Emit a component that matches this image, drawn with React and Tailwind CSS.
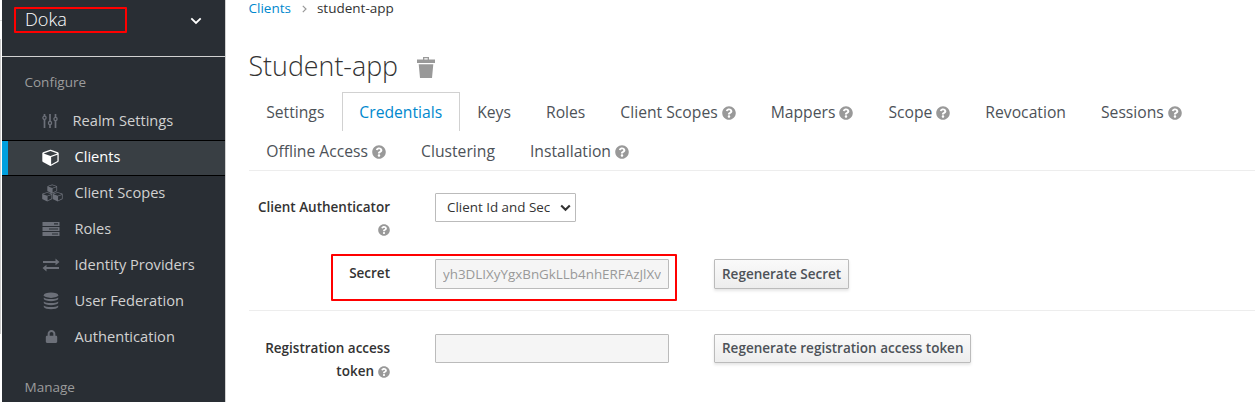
import { FaLock, FaQuestionCircle } from "react-icons/fa";

const cubePath =
  "M896 1629l640-349v-636l-640 233v752zm-64-865l698-254-698-254-698 254zm832-252v768q0 35-18 65t-49 47l-704 384q-28 16-61 16t-61-16l-704-384q-31-17-49-47t-18-65v-768q0-40 23-73t61-47l704-256q22-8 44-8t44 8l704 256q38 14 61 47t23 73z";

const Cube = () => (
  <svg width="17" height="17" viewBox="0 64 1664 1728" fill="currentColor">
    <path d={cubePath} />
  </svg>
);

const Cubes = () => (
  <svg width="21" height="18" viewBox="0 0 21 18" fill="currentColor">
    <path transform="translate(5.300 -.2) scale(.0059 .0054)" d={cubePath} />
    <path transform="translate(.2 7.400) scale(.0060 .0056)" d={cubePath} />
    <path transform="translate(10.700 7.400) scale(.0060 .0056)" d={cubePath} />
  </svg>
);

const Sliders = () => (
  <svg width="16" height="16" viewBox="0 0 16 16" fill="none" stroke="currentColor" strokeWidth="1.3">
    <path d="M2.5 1v2M2.5 6.5V15M8 1v7M8 12V15M13.500 1v3M13.500 7.500V15" strokeWidth="1.7" />
    <circle cx="2.5" cy="4.8" r="1.6" />
    <circle cx="8" cy="10" r="1.6" />
    <circle cx="13.5" cy="6" r="1.6" />
  </svg>
);

const Servers = () => (
  <svg width="18" height="14" viewBox="0 0 18 14" fill="currentColor">
    <path fillRule="evenodd" d="M.5 0h17v4H.5zM12 1.3v1.2h4V1.3zM.5 5h17v4H.5zM7 6.4v1.2h9V6.4zM.5 10h17v4H.5zM10 11.4v1.2h6v-1.2z" />
  </svg>
);

const Exchange = () => (
  <svg width="18" height="14" viewBox="0 0 18 14" fill="currentColor">
    <path d="M1 3h12.5V.5L17.5 4l-4 3.3V5H1zM17 9H4.5V6.7L.5 10l4 3.5V11H17z" />
  </svg>
);

const Database = () => (
  <svg width="16" height="18" viewBox="0 0 16 18" fill="currentColor">
    <ellipse cx="8" cy="3.2" rx="7.2" ry="2.700" />
    <path d="M.8 5.600c2 2 12.400 2 14.400 0v1.500c-1.500 2.700-12.900 2.700-14.400 0zM.8 9.600c2 2 12.400 2 14.400 0v1.500c-1.500 2.700-12.900 2.700-14.400 0zM.8 13.600c2 2 12.400 2 14.400 0v1.500c-1.500 2.900-12.900 2.900-14.400 0z" />
  </svg>
);

const Trash = () => (
  <svg width="18" height="21" viewBox="0 0 18 21" fill="#999">
    <path fillRule="evenodd" d="M6 0h6v2.500h6v3.500H0V2.500h6zM7.300 1.300v1.200h3.400V1.300zM1.700 7.300h14.600L15 21H3z" />
  </svg>
);

const Caret = ({ size = 12, w = 2 }) => (
  <svg width={size} height="8" viewBox="0 0 12 8" fill="none" stroke="currentColor" strokeWidth={w} className="shrink-0">
    <path d="M1.300 1.300 6 6l4.700-4.700" />
  </svg>
);

const Help = ({ size = 14 }) => <FaQuestionCircle size={size} className="shrink-0 text-[#999]" />;

const nav = [
  { label: "Realm Settings", icon: <Sliders />, width: "w-[70.5px]" },
  { label: "Clients", icon: <Cube />, active: true },
  { label: "Client Scopes", icon: <Cubes /> },
  { label: "Roles", icon: <Servers /> },
  { label: "Identity Providers", icon: <Exchange /> },
  { label: "User Federation", icon: <span className="pl-px"><Database /></span> },
  { label: "Authentication", icon: <span className="pb-px pl-[2.5px]"><FaLock size={13} /></span> },
];

function NavItem({ item }) {
  return (
    <a
      className={
        "flex h-9 items-center border-y text-[14.65px] " +
        (item.active
          ? "border-black bg-[#393f44] text-white shadow-[inset_6px_0_0_#00a0df]"
          : "border-transparent text-[#d1d1d1]")
      }
    >
      <span
        className={
          "flex shrink-0 items-center pb-[2px] pl-10 " +
          (item.width || "w-[72.5px]") +
          (item.active ? " text-white" : " text-[#6c7079]")
        }
      >
        {item.icon}
      </span>
      <span className="pb-[2px] whitespace-nowrap">{item.label}</span>
    </a>
  );
}

const rows = [
  [["Settings"], ["Credentials"], ["Keys"], ["Roles"], ["Client Scopes", 1], ["Mappers", 1], ["Scope", 1], ["Revocation"], ["Sessions", 1]],
  [["Offline Access", 1], ["Clustering"], ["Installation", 1]],
];

function Tab({ label, help }) {
  const active = label === "Credentials";
  return (
    <a
      className={
        "flex h-[39px] items-center gap-1 border border-b-0 px-[16.5px] pt-px text-[15.7px] whitespace-nowrap " +
        (active ? "border-[#d1d1d1] text-[#0088ce]" : "border-transparent text-[#4d5258]")
      }
    >
      <span>{label}</span>
      {help && <Help />}
    </a>
  );
}

const button =
  "flex items-center rounded-[1px] border border-[#bbb] bg-linear-to-b from-[#fafafa] to-[#ededed] px-[7px] text-[13.5px] font-semibold whitespace-nowrap text-[#4d5258] shadow-[0_2px_3px_rgba(3,3,3,0.1)]";

export default function App() {
  return (
    <div className="flex h-[402px] w-[1255px] overflow-hidden bg-white font-['Open_Sans',sans-serif]">
      <div className="flex w-[2px] shrink-0 flex-col pt-[20px]">
        <div className="h-[19px] border-t border-[#ddd]" />
        <div className="h-[295px] w-px bg-[#ccc]" />
      </div>
      <aside className="w-[224px] shrink-0 border-r border-[#d1d1d1] bg-[#292e34]">
        <div className="flex h-[57px] items-start justify-between border-b border-[#d1d1d1] pt-[7px] pr-[23px] pl-[12px] text-white">
          <div className="flex h-[26px] w-[113px] items-center rounded-[1px] border-2 border-[#f00] pl-[9px] text-[18.2px] font-light">Doka</div>
          <span className="flex pt-[10px]"><Caret w={1.8} /></span>
        </div>
        <div className="flex h-[47px] items-center pt-[4px] pl-[22.5px] text-[13.5px] text-[#9c9c9c]">Configure</div>
        <nav className="-mt-px pt-px">{nav.map((n) => <NavItem key={n.label} item={n} />)}</nav>
        <div className="pt-[21px] pl-[22.5px] text-[13.5px] text-[#9c9c9c]">Manage</div>
      </aside>

      <main className="flex min-w-0 flex-1 flex-col pl-[22.5px]">
        <div className="flex h-[17px] items-center text-[13.5px] leading-[17px] text-[#333]">
          <a className="text-[#0088ce]">Clients</a>
          <svg className="mr-[10px] ml-[11px]" width="5" height="8" viewBox="0 0 5 8" fill="none" stroke="#999" strokeWidth="1.2">
            <path d="m.8.8 3.200 3.200L.8 7.200" />
          </svg>
          <span>student-app</span>
        </div>
        <div className="flex h-[75px] items-center gap-[19px] pt-[22px]">
          <h1 className="text-[26.8px] leading-[34px] font-light text-[#333]">Student-app</h1>
          <span className="pt-[4px]"><Trash /></span>
        </div>
        <div className="h-[79px] border-b border-[#ededed]">
          {rows.map((r, i) => (
            <div key={i} className="flex pl-[0.2px]">
              {r.map(([label, help]) => <Tab key={label} label={label} help={help} />)}
            </div>
          ))}
        </div>

        <div className="flex h-[83px] pt-[22px]">
          <div className="flex w-[141.5px] flex-col items-end text-[13.5px] font-semibold text-[#333]">
            <span className="leading-[28px]">Client Authenticator</span>
            <span className="pt-[3px]"><Help size={12} /></span>
          </div>
          <div className="ml-[45px] flex h-[29px] w-[141px] items-center justify-between rounded-[1px] border border-[#bbb] pr-[4px] pl-[11px] text-[13.4px] text-[#333]">
            <span className="w-[103px] overflow-hidden whitespace-nowrap">Client Id and Secret</span>
            <Caret size={11} w={2.3} />
          </div>
        </div>

        <div className="flex h-[56px]">
          <div className="ml-[82.5px] flex h-[47px] w-[346px] items-start rounded-[1px] border-2 border-[#f00] pt-[3px] pl-[15px]">
            <span className="w-[42px] text-right text-[13.5px] leading-[29px] font-semibold text-[#333]">Secret</span>
            <div className="ml-[45px] flex h-[30px] w-[234px] shrink-0 items-center rounded-[1px] border border-[#bbb] bg-[#f5f5f5] px-[7px] text-[13.4px] text-[#999]">
              <span className="overflow-hidden whitespace-nowrap">yh3DLIXyYgxBnGkLLb4nhERFAzJlXvQ</span>
            </div>
          </div>
          <div className={button + " mt-[5px] ml-[37px] h-[30px] w-[135px]"}>Regenerate Secret</div>
        </div>

        <div className="flex flex-1 border-t border-[#ededed] pt-[23px]">
          <div className="w-[141.5px] text-right text-[13.5px] leading-[23px] font-semibold text-[#333]">
            <div className="pt-[3px]">Registration access</div>
            <div className="flex items-center justify-end gap-1">token <Help size={12} /></div>
          </div>
          <div className="ml-[45px] h-[29px] w-[234px] rounded-[1px] border border-[#bbb] bg-[#f5f5f5]" />
          <div className={button + " ml-[45px] h-[29px] w-[257px]"}>Regenerate registration access token</div>
        </div>
      </main>
    </div>
  );
}
